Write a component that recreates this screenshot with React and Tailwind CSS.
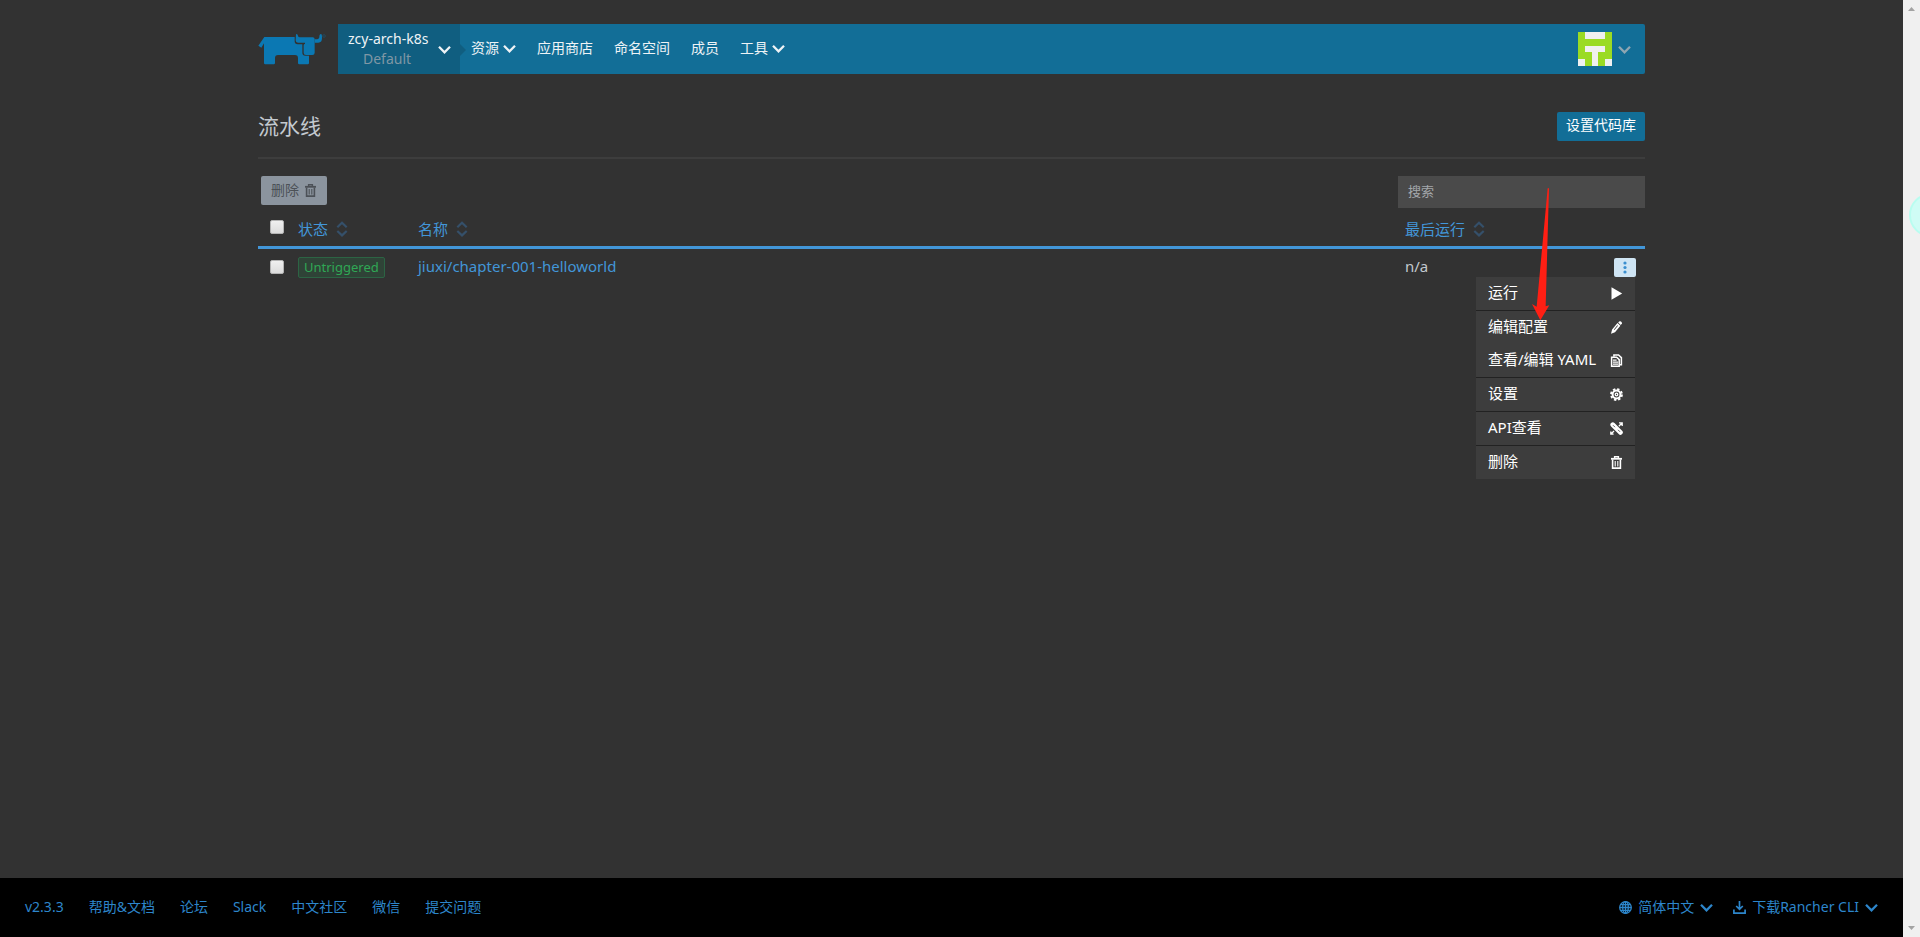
import { useState } from 'react';

const NAV = [
  { label: '资源', menu: true },
  { label: '应用商店' },
  { label: '命名空间' },
  { label: '成员' },
  { label: '工具', menu: true },
];

const FOOTER_LINKS = ['v2.3.3', '帮助&文档', '论坛', 'Slack', '中文社区', '微信', '提交问题'];

const ACTIONS = [
  { label: '运行', icon: PlayIcon },
  { label: '编辑配置', icon: PencilIcon, divider: true },
  { label: '查看/编辑 YAML', icon: FilesIcon },
  { label: '设置', icon: GearIcon, divider: true },
  { label: 'API查看', icon: LinkIcon, divider: true },
  { label: '删除', icon: TrashIcon, divider: true },
];

// 5x5 identicon, 1 = coloured cell
const AVATAR = ['10001', '11111', '10001', '11011', '01010'];

function Chevron() {
  return (
    <svg className="shrink-0" width="13" height="13" viewBox="0 0 13 13" fill="none" stroke="currentColor" strokeWidth="2.3">
      <path d="M1 3.8 6.5 9.3 12 3.8" />
    </svg>
  );
}

function SortIcon() {
  return (
    <svg className="text-[#35506a]" width="12" height="16" viewBox="0 0 12 16" fill="none" stroke="currentColor" strokeWidth="2.2">
      <path d="M1.3 6.2 6 1.8 10.7 6.2M1.3 10 6 14.4 10.7 10" />
    </svg>
  );
}

function PlayIcon() {
  return (
    <svg width="13" height="13" viewBox="0 0 13 13" fill="currentColor">
      <path d="M1.5.3 12.2 6.5 1.5 12.8z" />
    </svg>
  );
}

function PencilIcon() {
  return (
    <svg width="13" height="13" viewBox="0 0 13 13" fill="currentColor">
      <path d="M8.2 1.5 9.1.6a1.4 1.4 0 0 1 1.9 0l.6.6a1.4 1.4 0 0 1 0 1.9l-.9 1z" />
      <path fillRule="evenodd" d="M7.5 1.9 10.4 4.7 5 11.3 1 12.8 2.1 8.5zM7.4 4.2 3.9 8.6l.5.4 3.6-4.3z" />
    </svg>
  );
}

function FilesIcon() {
  return (
    <svg width="13" height="13" viewBox="0 0 13 13" fill="none" stroke="currentColor" strokeWidth="1.5">
      <path d="M3.9 2.8V1h4.6l2.9 2.7v7H9.7" />
      <path d="M1.6 3.2h5l2.6 2.4v6.6H1.6z" />
      <path d="M3 6.2h3.6M3 8.2h5M3 10.2h5" strokeWidth="1.2" />
    </svg>
  );
}

function GearIcon() {
  return (
    <svg width="13" height="13" viewBox="0 0 13 13" fill="none" stroke="currentColor">
      <circle cx="6.5" cy="6.5" r="3.9" strokeWidth="2" />
      <circle cx="6.5" cy="6.5" r="5.5" strokeWidth="1.8" strokeDasharray="2.4 1.92" />
      <circle cx="6.5" cy="6.5" r="1.3" strokeWidth="1.3" />
    </svg>
  );
}

function LinkIcon() {
  return (
    <svg width="13" height="13" viewBox="0 0 13 13" fill="none" stroke="currentColor">
      <path d="m2.8 2.8 7.6 7.6" strokeWidth="4.8" strokeLinecap="round" />
      <path d="m3 3.2 2 2M8 7.8l2 2" stroke="#3d3d3d" strokeWidth="0.8" />
      <path d="m1 12 3-3M8.8 4.2 12 1M9 .8h3.2V4M.8 9.4v2.8h2.8" strokeWidth="1.3" />
    </svg>
  );
}

function TrashIcon() {
  return (
    <svg width="13" height="13" viewBox="0 0 13 13" fill="none" stroke="currentColor">
      <path d="M1 2.8h11" strokeWidth="1.8" />
      <path d="M4.6 2.4V.8h3.8v1.6" strokeWidth="1.4" />
      <path d="M2.6 3.5v8.6h7.8V3.5" strokeWidth="1.6" />
      <path d="M5.2 5v5.5M7.8 5v5.5" strokeWidth="1.1" />
    </svg>
  );
}

function GlobeIcon() {
  return (
    <svg width="13" height="13" viewBox="0 0 13 13" fill="none" stroke="currentColor" strokeWidth="1.3">
      <circle cx="6.5" cy="6.5" r="5.8" />
      <ellipse cx="6.5" cy="6.5" rx="2.8" ry="5.8" />
      <path d="M6.5.7v11.6M.7 6.5h11.6M1.6 3.6h9.8M1.6 9.4h9.8" />
    </svg>
  );
}

function DownloadIcon() {
  return (
    <svg width="13" height="13" viewBox="0 0 13 13" fill="none" stroke="currentColor" strokeWidth="1.7">
      <path d="M6.5 0v8M3.2 5l3.3 3.3L9.8 5M.9 8.4v3.7h11.2V8.4" />
    </svg>
  );
}

function Logo() {
  return (
    <svg width="68" height="32" viewBox="24 57 204 96" fill="#0b78b3">
      <path d="M43 69h91v13q0 9 9 9h14v25q0 9 9 9h11v22q0 4-4 4h-25q-4 0-4-4v-14q0-10-9-10H84q-9 0-9 9v15q0 4-4 4H46q-4 0-4-4V88l-8 13-9-6z" />
      <path d="M138 60q6 0 6 5 0 5 6 5h38q6 0 6 6v40q0 7-7 7h-19q-7 0-7-7V94q0-4 4-4v-4h-21q-7 0-7-7z" />
      <path d="M194 76h3q11 0 11-7 0-9 5-9 3 0 3 12 0 14-11 14h-11z" />
      <circle cx="222" cy="66" r="4" fill="none" stroke="#1c516c" strokeWidth="2" />
    </svg>
  );
}

function Avatar() {
  return (
    <svg width="34" height="34" viewBox="0 0 5 5" shapeRendering="crispEdges">
      <rect width="5" height="5" fill="#f0f0f0" />
      {AVATAR.map((row, y) =>
        [...row].map((cell, x) =>
          cell === '1' ? <rect key={`${x}-${y}`} x={x} y={y} width="1" height="1" fill="#9bdb23" /> : null
        )
      )}
    </svg>
  );
}

function Checkbox({ label, ...props }) {
  return (
    <input
      type="checkbox"
      aria-label={label}
      className="block h-3.5 w-3.5 appearance-none rounded-xs border border-[#b4b4b4] bg-linear-to-b from-[#f0f0f0] to-[#dcdcdc] checked:from-[#4296d8] checked:to-[#4296d8]"
      {...props}
    />
  );
}

function SortHeader({ children }) {
  return (
    <button type="button" className="flex items-center gap-2 text-[15px] leading-5 text-[#4296d8]">
      {children}
      <SortIcon />
    </button>
  );
}

function ActionMenu() {
  return (
    <ul className="absolute top-full right-px z-10 w-[159px] bg-[#3d3d3d] text-left text-[15px] leading-5 text-white">
      {ACTIONS.map(({ label, icon: Icon, divider }) => (
        <li key={label} className={divider ? 'border-t border-[#222222]' : ''}>
          <button type="button" className="flex h-[33px] w-full items-center justify-between px-3 whitespace-nowrap">
            <span className="pb-1">{label}</span>
            <Icon />
          </button>
        </li>
      ))}
    </ul>
  );
}

function PointerArrow() {
  return (
    <svg className="pointer-events-none absolute top-[-71px] right-[86px] z-20" width="20" height="135" viewBox="420 51 60 405" fill="#ff1f14">
      <path d="M473 55h4l-10 354 11-3-27 45-25-49 14 8z" />
    </svg>
  );
}

function Header() {
  return (
    <header className="flex items-center gap-3 pt-6">
      <a href="#home" aria-label="Rancher">
        <Logo />
      </a>
      <div className="flex h-[50px] flex-1 items-center rounded-xs bg-[#126e97] text-[14px] leading-5 text-[#eef3f6]">
        <button type="button" className="relative flex h-full w-[122px] items-center justify-between bg-[#105e80] pr-[9px] pl-2.5">
          <span className="flex flex-col items-start">
            <span>zcy-arch-k8s</span>
            <span className="pl-[15px] text-[#7f97a5]">Default</span>
          </span>
          <Chevron />
          <svg className="absolute top-5 left-full" width="6" height="12" viewBox="0 0 6 12" fill="#105e80">
            <path d="M0 0 6 6 0 12z" />
          </svg>
        </button>
        <nav className="flex flex-1 items-center gap-[21px] pb-0.5 pl-[11px]">
          {NAV.map(({ label, menu }) => (
            <a key={label} href={`#${label}`} className="flex items-center gap-1">
              {label}
              {menu && <Chevron />}
            </a>
          ))}
        </nav>
        <button type="button" aria-label="User menu" className="flex items-center gap-1.5 pr-3.5 text-[#8fa6b2]">
          <Avatar />
          <Chevron />
        </button>
      </div>
    </header>
  );
}

function PipelineTable() {
  const [checked, setChecked] = useState(false);

  return (
    <table className="w-full table-fixed text-left text-[15px] leading-5">
      <colgroup>
        <col className="w-10" />
        <col className="w-[120px]" />
        <col />
        <col className="w-[200px]" />
        <col className="w-10" />
      </colgroup>
      <thead>
        <tr className="h-[39px] border-b-3 border-[#4296d8]">
          <th className="pl-3">
            <Checkbox label="全选" checked={checked} onChange={(e) => setChecked(e.target.checked)} />
          </th>
          <th className="pt-1 font-normal"><SortHeader>状态</SortHeader></th>
          <th className="pt-1 font-normal"><SortHeader>名称</SortHeader></th>
          <th className="pt-1 font-normal"><SortHeader>最后运行</SortHeader></th>
          <th />
        </tr>
      </thead>
      <tbody>
        <tr className="h-10">
          <td className="pb-0.5 pl-3">
            <Checkbox label="选择流水线" checked={checked} onChange={(e) => setChecked(e.target.checked)} />
          </td>
          <td>
            <span className="flex h-[21px] w-fit items-center rounded-xs border border-[#2c6444] bg-[#2f4337] px-[5px] pb-0.5 text-[13px] leading-4 text-[#2fa855]">
              Untriggered
            </span>
          </td>
          <td className="pb-1">
            <a href="#pipeline" className="text-[#4296d8]">jiuxi/chapter-001-helloworld</a>
          </td>
          <td className="pb-1 text-[#c3c9cf]">n/a</td>
          <td>
            <div className="relative mr-[9px] ml-auto w-[22px]">
              <button type="button" aria-label="操作" className="flex h-[19px] w-full items-center justify-center rounded-xs bg-[#cfe5f4] text-[#3a8fd0]">
                <svg width="4" height="13" viewBox="0 0 4 13" fill="currentColor">
                  <circle cx="2" cy="2" r="1.6" />
                  <circle cx="2" cy="6.5" r="1.6" />
                  <circle cx="2" cy="11" r="1.6" />
                </svg>
              </button>
              <ActionMenu />
              <PointerArrow />
            </div>
          </td>
        </tr>
      </tbody>
    </table>
  );
}

function Footer() {
  return (
    <footer className="flex h-[59px] items-center justify-between bg-black px-[25px] text-[14px] leading-5 text-[#2d86cb]">
      <nav className="flex gap-[25px] pb-0.5">
        {FOOTER_LINKS.map((label) => (
          <a key={label} href={`#${label}`}>{label}</a>
        ))}
      </nav>
      <div className="flex gap-5">
        <button type="button" className="flex items-center gap-1.5">
          <GlobeIcon />
          <span className="pb-0.5">简体中文</span>
          <Chevron />
        </button>
        <button type="button" className="flex items-center gap-1.5">
          <DownloadIcon />
          <span className="pb-0.5">下载Rancher CLI</span>
          <Chevron />
        </button>
      </div>
    </footer>
  );
}

function ScrollRail() {
  return (
    <div className="relative flex w-[17px] shrink-0 flex-col items-center justify-between overflow-hidden bg-[#f0f0f0] py-[7px] text-[#a3a3a3]">
      <svg width="7" height="4" viewBox="0 0 7 4" fill="currentColor"><path d="M0 4 3.5 0 7 4z" /></svg>
      <svg width="7" height="4" viewBox="0 0 7 4" fill="currentColor"><path d="M0 0h7L3.5 4z" /></svg>
      <div className="absolute top-[193px] left-1.5 h-11 w-11 rounded-full border-2 border-[#b9fdf0] bg-[#cffcf5]" />
    </div>
  );
}

export default function App() {
  return (
    <div className="flex min-h-screen bg-[#323232] font-['Noto_Sans','Noto_Sans_CJK_SC',sans-serif]">
      <div className="flex min-w-0 flex-1 flex-col">
        <div className="mx-auto w-full max-w-[1387px] flex-1">
          <Header />
          <main>
            <div className="mt-[31px] flex h-[54px] items-center justify-between border-b-2 border-[#3d3d3d] pb-2.5">
              <h1 className="text-[21px] leading-7 text-[#c3c9cf]">流水线</h1>
              <button type="button" className="h-[29px] rounded-xs bg-[#126e97] px-[9px] pb-0.5 text-[14px] leading-5 text-white">
                设置代码库
              </button>
            </div>
            <div className="mt-[17px] flex items-start justify-between pl-[3px]">
              <button type="button" className="flex h-[29px] items-center gap-[5px] rounded-xs bg-[#8b949e] px-2.5 text-[14px] leading-5 text-[#4c5157]">
                <span className="pb-0.5">删除</span>
                <TrashIcon />
              </button>
              <input
                type="search"
                aria-label="搜索"
                placeholder="搜索"
                className="h-8 w-[247px] bg-[#4a4a4a] px-2.5 pb-0.5 text-[13px] leading-5 text-[#c3c9cf] outline-none placeholder:text-[#a3a7ab]"
              />
            </div>
            <PipelineTable />
          </main>
        </div>
        <Footer />
      </div>
      <ScrollRail />
    </div>
  );
}
